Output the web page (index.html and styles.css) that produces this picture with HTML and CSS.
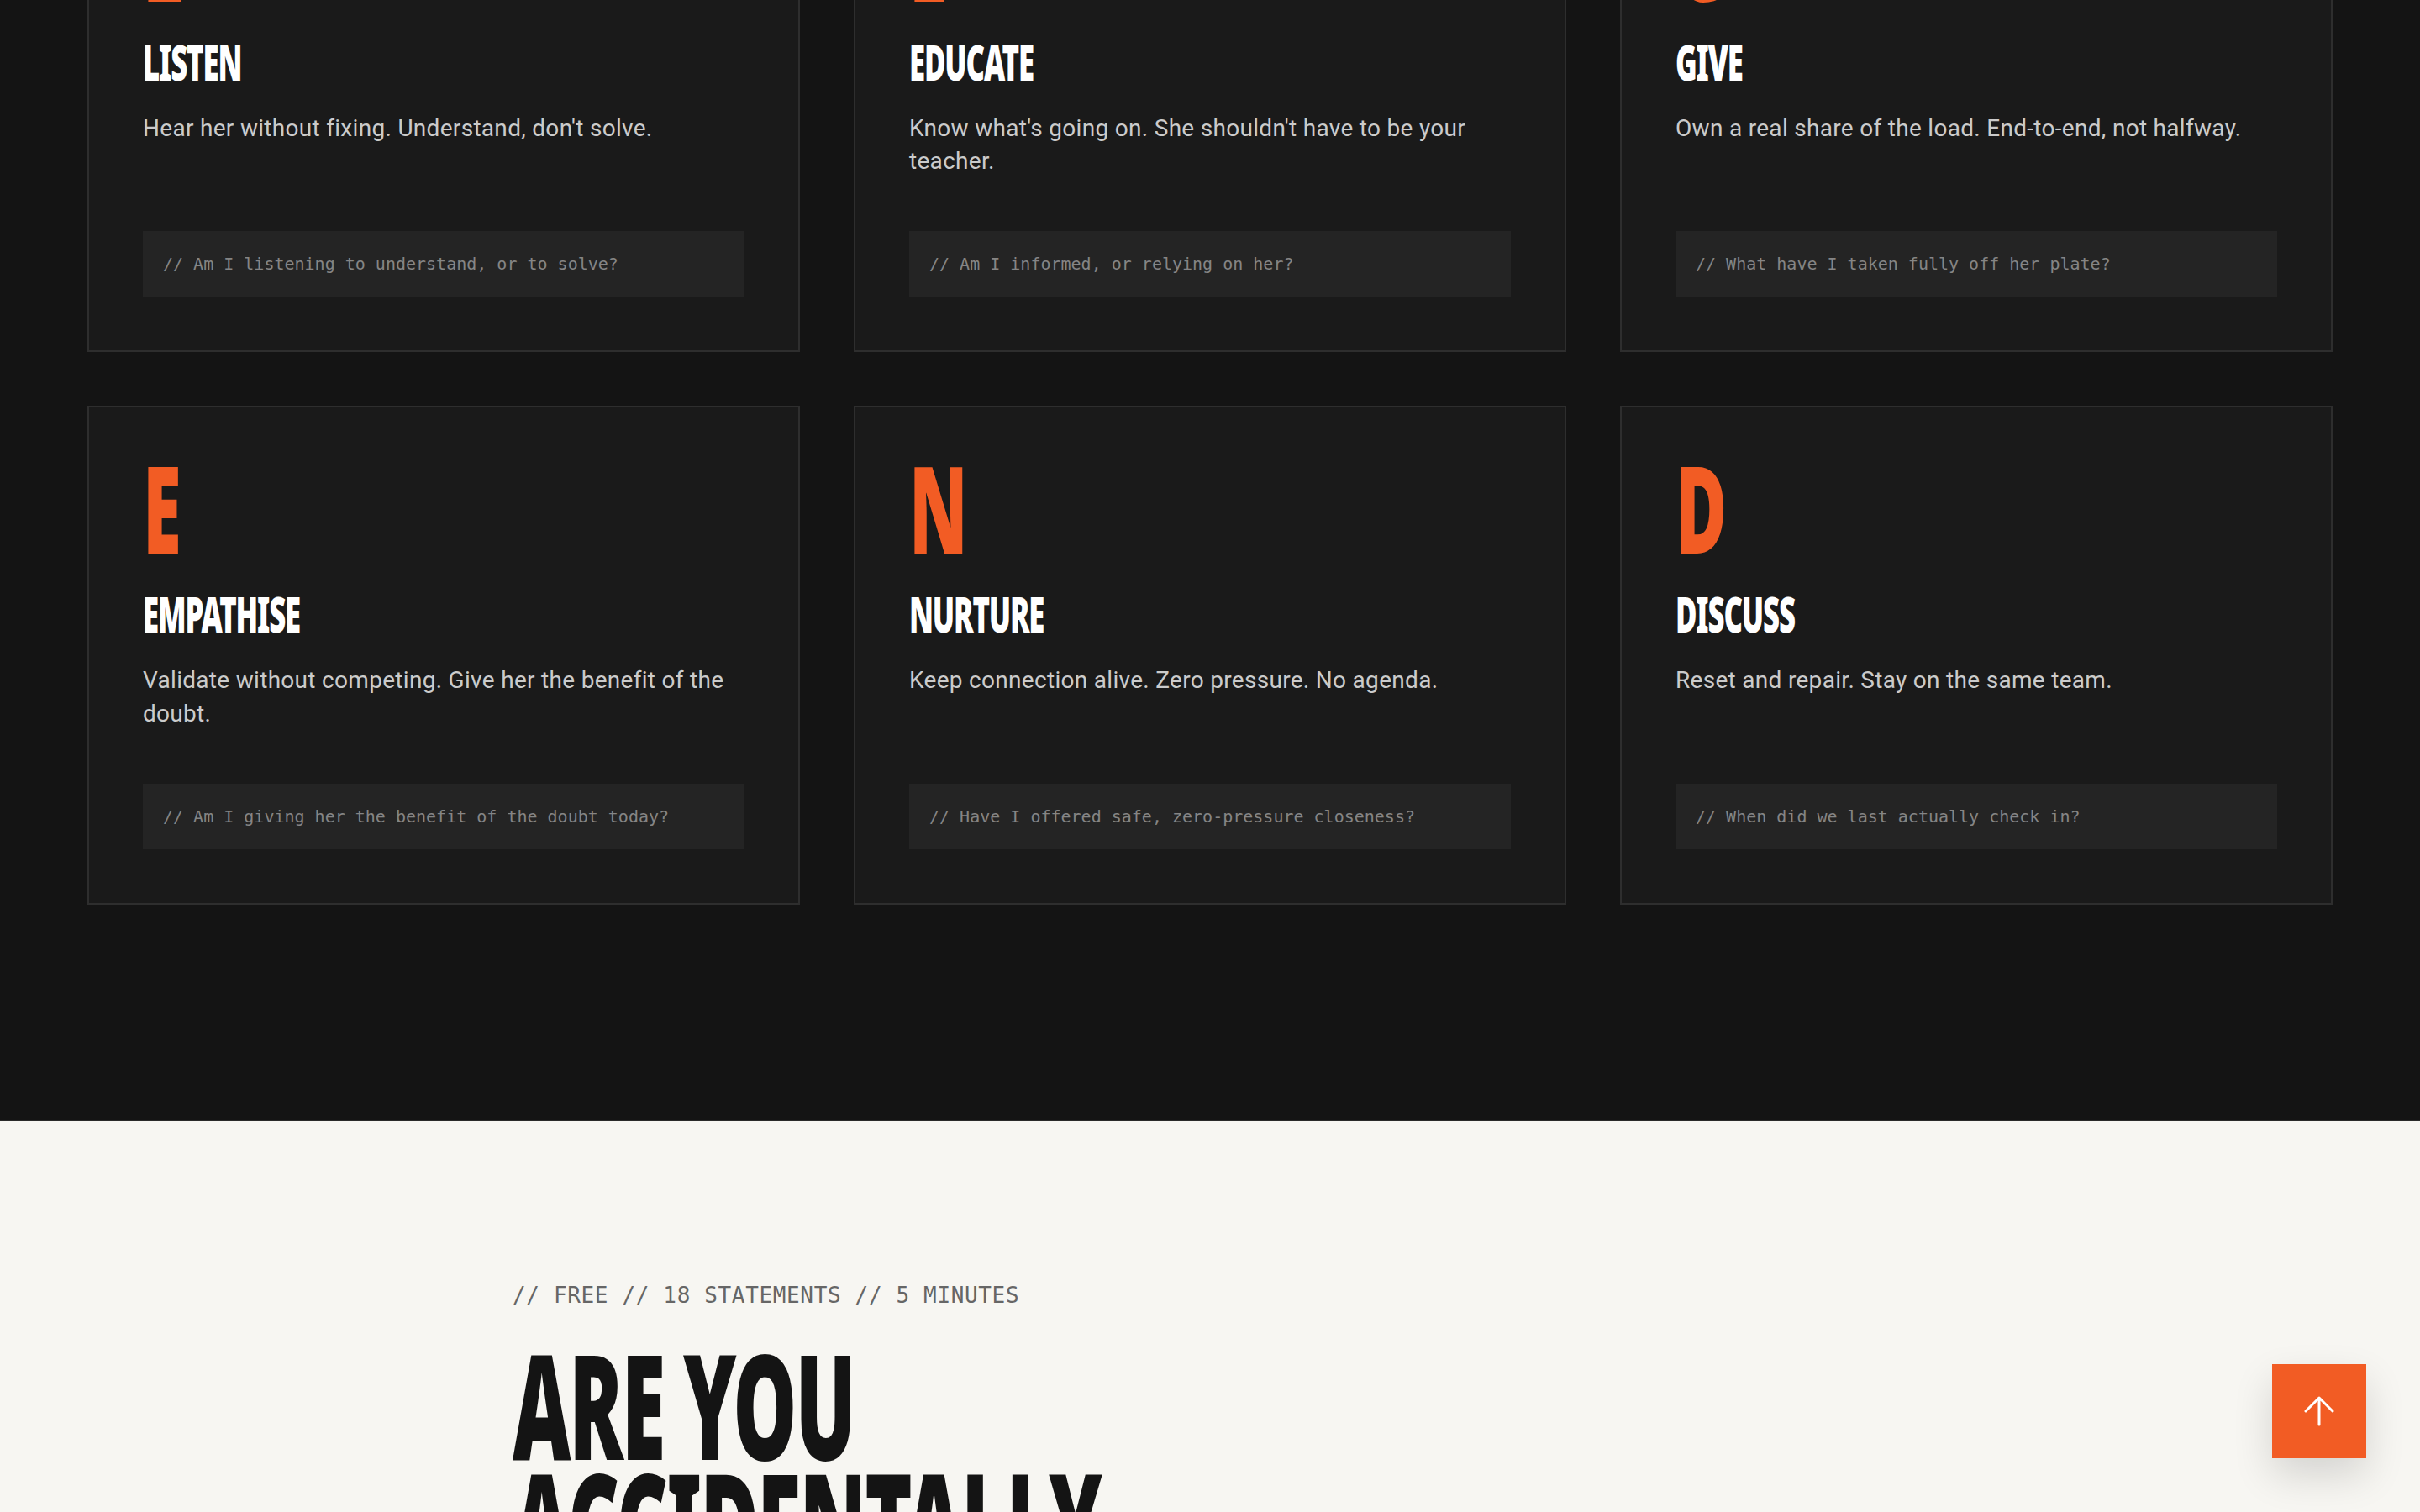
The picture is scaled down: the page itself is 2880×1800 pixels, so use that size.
FILE: index.html
```html
<!doctype html>
<html>
    <head>
        <meta charset="UTF-8"/>
        <title>LEGEND</title>
        <link rel="stylesheet" href="styles.css">
    </head>
    <body>
    <section class="pillars">
        <div class="pillar-grid">
            <article class="pillar">
                <div class="pillar-letter">L</div>
                <h3 class="pillar-title">Listen</h3>
                <p class="pillar-text">Hear her without fixing. Understand, don't solve.</p>
                <div class="pillar-check">// Am I listening to understand, or to solve?</div>
            </article>
            <article class="pillar">
                <div class="pillar-letter">E</div>
                <h3 class="pillar-title">Educate</h3>
                <p class="pillar-text">Know what's going on. She shouldn't have to be your teacher.</p>
                <div class="pillar-check">// Am I informed, or relying on her?</div>
            </article>
            <article class="pillar">
                <div class="pillar-letter">G</div>
                <h3 class="pillar-title">Give</h3>
                <p class="pillar-text">Own a real share of the load. End-to-end, not halfway.</p>
                <div class="pillar-check">// What have I taken fully off her plate?</div>
            </article>
            <article class="pillar">
                <div class="pillar-letter">E</div>
                <h3 class="pillar-title">Empathise</h3>
                <p class="pillar-text">Validate without competing. Give her the benefit of the doubt.</p>
                <div class="pillar-check">// Am I giving her the benefit of the doubt today?</div>
            </article>
            <article class="pillar">
                <div class="pillar-letter">N</div>
                <h3 class="pillar-title">Nurture</h3>
                <p class="pillar-text">Keep connection alive. Zero pressure. No agenda.</p>
                <div class="pillar-check">// Have I offered safe, zero-pressure closeness?</div>
            </article>
            <article class="pillar">
                <div class="pillar-letter">D</div>
                <h3 class="pillar-title">Discuss</h3>
                <p class="pillar-text">Reset and repair. Stay on the same team.</p>
                <div class="pillar-check">// When did we last actually check in?</div>
            </article>
        </div>
    </section>
    <section class="quiz">
        <div class="quiz-inner">
            <p class="quiz-tag">// FREE // 18 STATEMENTS // 5 MINUTES</p>
            <h2 class="quiz-title">Are you<br>accidentally</h2>
        </div>
    </section>
    <a href="#" class="to-top"><!--回到顶部-->
        <svg width="36" height="36" viewBox="0 0 36 36" fill="none" stroke="#fff" stroke-width="3" stroke-linecap="round" stroke-linejoin="round">
            <path d="M18 34V2M2 18L18 2L34 18"/>
        </svg>
    </a>
    </body>
</html>
```

FILE: styles.css
```css
* {
    margin: 0px;
    padding: 0px;
    box-sizing: border-box;
}
body {
    background: #f7f6f2;
    font-family: Roboto, "Noto Sans", sans-serif;
}
/* 深色区域, 页面已往下滚了 174px */
.pillars {
    background: #141414;
    margin-top: -174px;
    padding: 0 104px 256px;
    border-bottom: 2px solid #2a2a2a;
}
.pillar-grid {
    display: grid;
    grid-template-columns: repeat(3, 1fr);
    gap: 64px;
}
.pillar {
    display: flex;
    flex-direction: column;
    background: #1a1a1a;
    border: 2px solid #2e2e2e;
    padding: 64px;
}
/* 没有窄体字, 用 scaleX 压窄 */
.pillar-letter,
.pillar-title,
.quiz-title {
    font-family: "Noto Sans", sans-serif;
    font-weight: 900;
    text-transform: uppercase;
    transform-origin: left center;
}
.pillar-letter {
    color: #f25c24;
    font-size: 144px;
    line-height: 0.75;
    margin-bottom: 44px;
    transform: scaleX(0.58);
}
.pillar-title {
    color: #fff;
    font-size: 59px;
    line-height: 1;
    letter-spacing: -2px;
    margin-bottom: 30px;
    transform: scaleX(0.59);
}
.pillar-text {
    color: #cbcbcb;
    font-size: 28px;
    line-height: 1.4;
    letter-spacing: 0.3px;
    margin-bottom: 64px;
}
.pillar-check {
    margin-top: auto;
    background: #242424;
    padding: 24px;
    font-family: "DejaVu Sans Mono", monospace;
    font-size: 20px;
    line-height: 30px;
    color: #858585;
}
.quiz {
    padding-top: 188px;
}
.quiz-inner {
    max-width: 1660px;
    margin: 0 auto;
}
.quiz-tag {
    font-family: "DejaVu Sans Mono", monospace;
    font-size: 26px;
    line-height: 39px;
    letter-spacing: 0.65px;
    color: #666;
    margin-bottom: 38px;
}
.quiz-title {
    color: #141414;
    font-size: 174px;
    line-height: 142px;
    letter-spacing: -4px;
    transform: scaleX(0.55);
}
.to-top {
    position: fixed;
    right: 64px;
    bottom: 64px;
    width: 112px;
    height: 112px;
    background: #f25c24;
    display: flex;
    align-items: center;
    justify-content: center;
    box-shadow: 0 20px 48px rgba(0,0,0,.14);
}
```
